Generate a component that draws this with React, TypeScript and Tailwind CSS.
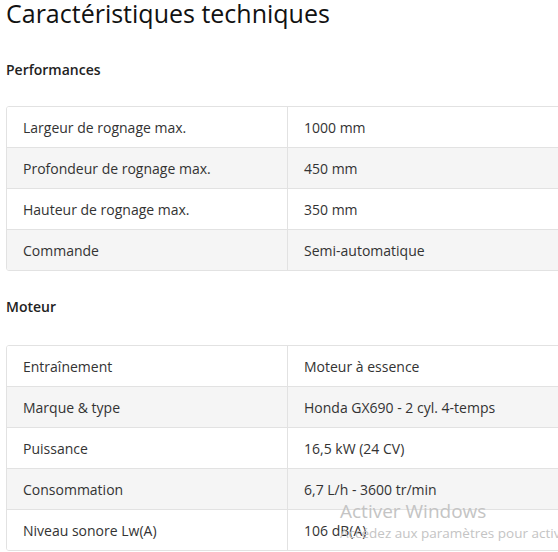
const performances: [string, string][] = [
  ["Largeur de rognage max.", "1000 mm"],
  ["Profondeur de rognage max.", "450 mm"],
  ["Hauteur de rognage max.", "350 mm"],
  ["Commande", "Semi-automatique"],
];

const moteur: [string, string][] = [
  ["Entraînement", "Moteur à essence"],
  ["Marque & type", "Honda GX690 - 2 cyl. 4-temps"],
  ["Puissance", "16,5 kW (24 CV)"],
  ["Consommation", "6,7 L/h - 3600 tr/min"],
  ["Niveau sonore Lw(A)", "106 dB(A)"],
];

const SpecTable = ({ rows }: { rows: [string, string][] }) => (
  <div className="w-[570px] border border-[#e2e2e2] rounded-[3px] overflow-hidden">
    {rows.map(([label, value], i) => (
      <div
        key={label}
        className={`flex items-center text-[14px] text-[#333] ${
          i > 0 ? "h-[41px] border-t border-[#e2e2e2]" : "h-[40px]"
        } ${i % 2 === 1 ? "bg-[#f5f5f5]" : "bg-white"}`}
      >
        <div className="w-[281px] h-full flex items-center pl-[16px] border-r border-[#e2e2e2]">
          {label}
        </div>
        <div className="flex-1 pl-[16px]">{value}</div>
      </div>
    ))}
  </div>
);

export default function App() {
  return (
    <div
      className="relative w-[558px] h-[552px] overflow-hidden bg-white pl-[6px] pt-[1px]"
      style={{ fontFamily: '"Open Sans", "Liberation Sans", sans-serif' }}
    >
      <h1 className="text-[25px] leading-[24px] text-[#111] font-normal whitespace-nowrap">
        Caractéristiques techniques
      </h1>

      <h2 className="mt-[35px] text-[14px] leading-[20px] font-semibold text-[#222]">Performances</h2>
      <div className="mt-[26px]">
        <SpecTable rows={performances} />
      </div>

      <h2 className="mt-[26px] text-[14px] leading-[20px] font-semibold text-[#222]">Moteur</h2>
      <div className="mt-[28px]">
        <SpecTable rows={moteur} />
      </div>

      {/* windows activation watermark */}
      <div className="absolute left-[340px] top-[500px] text-[#c4c4c4] pointer-events-none whitespace-nowrap">
        <div className="text-[19px] leading-[22px]">Activer Windows</div>
        <div className="text-[13.5px] leading-[18px] mt-[2px]">
          Accédez aux paramètres pour activer Windows.
        </div>
      </div>
    </div>
  );
}
